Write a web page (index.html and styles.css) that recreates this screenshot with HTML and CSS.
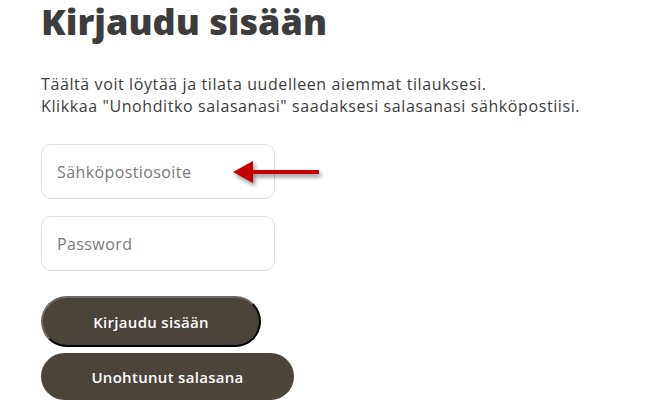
FILE: index.html
```html
<!DOCTYPE html>
<html lang="fi">
<head>
  <meta charset="UTF-8" />
  <meta name="viewport" content="width=device-width, initial-scale=1.0"/>
  <title>Kirjaudu sisään</title>
  <link rel="stylesheet" href="styles.css">
</head>
<body>
  <div class="login">
    <h1>Kirjaudu sisään</h1>

    <p class="intro">
      Täältä voit löytää ja tilata uudelleen aiemmat tilauksesi.<br>
      Klikkaa "Unohditko salasanasi" saadaksesi salasanasi sähköpostiisi.
    </p>

    <form class="login-form" onsubmit="return false">
      <div class="field">
        <input type="email" placeholder="Sähköpostiosoite" />
        <svg class="arrow" width="96" height="30" viewBox="0 0 96 30">
          <path d="M2 12 L22 1 L22 10 L88 10 L88 14 L22 14 L22 23 Z" fill="#c40000" />
        </svg>
      </div>
      <div class="field">
        <input type="password" placeholder="Password" />
      </div>

      <div class="actions">
        <button type="submit" class="btn btn-login">Kirjaudu sisään</button>
        <button type="button" class="btn btn-forgot">Unohtunut salasana</button>
      </div>
    </form>
  </div>
</body>
</html>
```

FILE: styles.css
```css
:root {
  --text: #3c3c3c;
  --muted: #7a7a7a;
  --line: #dedede;
  --button: #4b443b;
}

body {
  margin: 0;
  padding: 0;
  font-family: "Open Sans", sans-serif;
  background: white;
  color: var(--text);
}

.login {
  padding: 0 41px;
}

h1 {
  margin: 0;
  padding-top: 1px;
  font-size: 36px;
  line-height: 42px;
  font-weight: 800;
  color: #3d3d3d;
}

.intro {
  margin: 30px 0 0;
  font-size: 16px;
  line-height: 22px;
  letter-spacing: 0.6px;
}

.login-form {
  margin-top: 27px;
}

.field {
  position: relative;
  width: 234px;
  margin-bottom: 17px;
}

.field input {
  box-sizing: border-box;
  width: 100%;
  height: 55px;
  padding: 0 15px;
  border: 1px solid var(--line);
  border-radius: 10px;
  font-family: inherit;
  font-size: 16px;
  letter-spacing: 0.4px;
  color: var(--text);
  outline: none;
}

.field input::placeholder {
  color: var(--muted);
}

.arrow {
  position: absolute;
  left: 190px;
  top: 16px;
  filter: drop-shadow(2px 3px 2px rgba(0, 0, 0, 0.45));
}

.actions {
  display: flex;
  flex-direction: column;
  align-items: flex-start;
  gap: 6px;
  margin-top: 25px;
}

.btn {
  box-sizing: border-box;
  height: 47px;
  padding: 0;
  border: none;
  border-radius: 24px;
  background: var(--button);
  color: white;
  font-family: inherit;
  font-size: 15px;
  font-weight: 600;
  letter-spacing: 0.3px;
  cursor: pointer;
}

.btn-login {
  width: 220px;
  height: 51px;
  border: 2px solid;
  border-color: #6e6a64 #000 #000 #6e6a64;
  border-radius: 26px;
}

.btn-forgot {
  width: 253px;
}
```
